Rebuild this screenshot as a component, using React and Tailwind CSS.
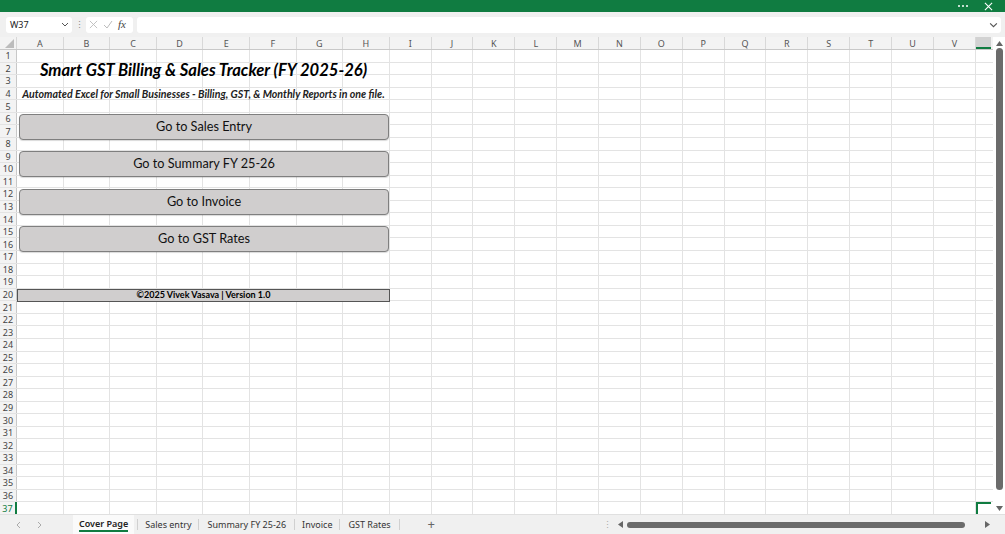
import React from "react";

const COLS = ["A","B","C","D","E","F","G","H","I","J","K","L","M","N","O","P","Q","R","S","T","U","V"];
const GRID = "grid grid-cols-[17px_repeat(8,46.6px)_repeat(14,41.86px)_1fr]";
const ROWS = Array.from({ length: 37 }, (_, i) => i + 1);

function Button({ children, top }) {
  return (
    <div className={`absolute left-[2px] w-[370px] h-[26px] ${top} rounded-[4px] border-[1.5px] border-[#7f7f7f] bg-[#d0cece] flex items-center justify-center text-[12.7px] text-[#111] shadow-[0_1px_1px_rgba(0,0,0,0.15)] whitespace-nowrap`}>
      {children}
    </div>
  );
}

function Sep() {
  return <div className="h-[11px] w-px bg-[#d0d0d0] shrink-0"></div>;
}

export default function App() {
  return (
    <div className="w-[1005px] h-[534px] overflow-hidden flex flex-col bg-white font-['Noto_Sans',sans-serif] select-none">
      {/* Title bar */}
      <div className="h-[12px] shrink-0 bg-[#107c41] flex items-center justify-end pr-[12px] gap-[16px] text-white">
        <div className="flex gap-[2px]">
          <div className="w-[2px] h-[2px] bg-white rounded-full"></div>
          <div className="w-[2px] h-[2px] bg-white rounded-full"></div>
          <div className="w-[2px] h-[2px] bg-white rounded-full"></div>
        </div>
        <svg width="9" height="9" viewBox="0 0 10 10" className="stroke-white" strokeWidth="1.2"><path d="M1 1L9 9M9 1L1 9" /></svg>
      </div>

      {/* Formula bar */}
      <div className="h-[25px] shrink-0 bg-[#f0f0f0] flex items-center pl-[6px] pr-[4px]">
        <div className="w-[66px] h-[16px] bg-white rounded-[3px] flex items-center justify-between pl-[4px] pr-[3px] text-[9px] text-[#222]">
          <span>W37</span>
          <svg width="8" height="5" viewBox="0 0 8 5"><path d="M1 1l3 3 3-3" fill="none" stroke="#555" strokeWidth="1" /></svg>
        </div>
        <div className="w-[14px] flex justify-center text-[#888] text-[9px]">⋮</div>
        <div className="w-[47px] h-[16px] bg-white rounded-[3px] flex items-center gap-[5px] pl-[3px]">
          <svg width="9" height="9" viewBox="0 0 10 10"><path d="M1 1L9 9M9 1L1 9" stroke="#bbb" strokeWidth="1" /></svg>
          <svg width="10" height="9" viewBox="0 0 10 9"><path d="M1 5l3 3 5-7" fill="none" stroke="#bbb" strokeWidth="1" /></svg>
          <span className="font-['Liberation_Serif',serif] italic text-[11px] text-[#444] leading-none">fx</span>
        </div>
        <div className="ml-[4px] flex-1 h-[16px] bg-white rounded-[3px] flex items-center justify-end pr-[3px]">
          <svg width="9" height="6" viewBox="0 0 8 5"><path d="M1 1l3 3 3-3" fill="none" stroke="#555" strokeWidth="1" /></svg>
        </div>
      </div>

      {/* Sheet area */}
      <div className="h-[477px] shrink-0 flex">
        <div className="flex-1 relative overflow-hidden">
          {/* Column headers */}
          <div className={`${GRID} h-[13px] bg-[#f3f3f3] border-b border-[#c8c8c8]`}>
            <div className="relative border-r border-[#d8d8d8]">
              <svg width="9" height="9" viewBox="0 0 9 9" className="absolute right-[2px] bottom-[1px]"><path d="M9 0L9 9L0 9Z" fill="#bcbcbc" /></svg>
            </div>
            {COLS.map((c) => (
              <div key={c} className="border-r border-[#d8d8d8] flex items-center justify-center text-[9px] text-[#555] leading-none">{c}</div>
            ))}
            <div className="bg-[#d2d2d2] border-b-[2px] border-[#107c41] mr-[2px]"></div>
          </div>
          {/* Rows */}
          {ROWS.map((r) => (
            <div key={r} className={`${GRID} h-[12.57px] border-b border-[#e3e3e3]`}>
              <div className={`bg-[#f3f3f3] flex items-center justify-center text-[9px] leading-none ${r === 37 ? "text-[#107c41] border-r-[2px] border-[#107c41]" : "text-[#444] border-r border-[#c8c8c8]"}`}>{r}</div>
              {COLS.map((c) => (
                <div key={c} className="border-r border-[#e3e3e3]"></div>
              ))}
              <div className={r === 37 ? "border-t-[2px] border-l-[2px] border-[#107c41] mr-[2px]" : ""}></div>
            </div>
          ))}

          {/* Overlay content on the sheet */}
          <div className="absolute left-[17px] top-[13px] w-[373px] h-[300px] font-['Lato',sans-serif]">
            <div className="absolute left-0 top-[9px] w-[373px] h-[22px] flex items-center justify-center text-[16.6px] font-bold italic text-black whitespace-nowrap">
              Smart GST Billing &amp; Sales Tracker (FY 2025-26)
            </div>
            <div className="absolute left-0 top-[38px] w-[373px] h-[14px] flex items-center justify-center text-[10.6px] font-bold italic text-[#222] whitespace-nowrap">
              Automated Excel for Small Businesses - Billing, GST, &amp; Monthly Reports in one file.
            </div>
            <Button top="top-[64px]">Go to Sales Entry</Button>
            <Button top="top-[101px]">Go to Summary FY 25-26</Button>
            <Button top="top-[139px]">Go to Invoice</Button>
            <Button top="top-[176px]">Go to GST Rates</Button>
            <div className="absolute left-0 top-[238.5px] w-[373px] h-[13px] bg-[#d0cece] border border-[#555] flex items-center justify-center text-[9px] font-bold text-black whitespace-nowrap">
              ©2025 Vivek Vasava | Version 1.0
            </div>
          </div>
        </div>

        {/* Vertical scrollbar */}
        <div className="w-[12px] bg-white flex flex-col items-center pt-[4px] pb-[3px]">
          <svg width="7" height="5" viewBox="0 0 7 5"><path d="M3.5 0L7 5H0Z" fill="#666" /></svg>
          <div className="w-[7px] flex-1 mt-[2px] mb-[16px] rounded-full bg-[#6b6b6b]"></div>
          <svg width="7" height="5" viewBox="0 0 7 5"><path d="M0 0H7L3.5 5Z" fill="#666" /></svg>
        </div>
      </div>

      {/* Sheet tabs */}
      <div className="h-[20px] shrink-0 bg-[#f0f0f0] border-t border-[#e0e0e0] flex items-center text-[9px] text-[#333] whitespace-nowrap">
        <div className="w-[73px] shrink-0 flex items-center gap-[16px] pl-[16px]">
          <svg width="5" height="8" viewBox="0 0 5 8"><path d="M4 1L1 4l3 3" fill="none" stroke="#aaa" strokeWidth="1" /></svg>
          <svg width="5" height="8" viewBox="0 0 5 8"><path d="M1 1l3 3-3 3" fill="none" stroke="#aaa" strokeWidth="1" /></svg>
        </div>
        <div className="h-full shrink-0 flex items-center bg-[#fafafa] px-[6px]">
          <span className="font-semibold text-[#222] border-b-[2px] border-[#107c41] leading-[12px]">Cover Page</span>
        </div>
        <div className="w-[3px]"></div>
        <Sep />
        <div className="px-[7px] shrink-0">Sales entry</div>
        <Sep />
        <div className="px-[8px] shrink-0">Summary FY 25-26</div>
        <Sep />
        <div className="px-[7px] shrink-0">Invoice</div>
        <Sep />
        <div className="px-[8px] shrink-0">GST Rates</div>
        <Sep />
        <div className="ml-[28px] text-[13px] text-[#666] leading-none shrink-0">+</div>
        <div className="ml-auto flex items-center pr-[15px]">
          <div className="w-[14px] flex justify-center text-[#aaa] text-[9px]">⋮</div>
          <div className="w-[4px]"></div>
          <svg width="5" height="7" viewBox="0 0 5 7"><path d="M5 0V7L0 3.5Z" fill="#666" /></svg>
          <div className="w-[4px]"></div>
          <div className="h-[6px] w-[338px] rounded-full bg-[#6b6b6b]"></div>
          <div className="w-[20px]"></div>
          <svg width="5" height="7" viewBox="0 0 5 7"><path d="M0 0V7L5 3.5Z" fill="#666" /></svg>
        </div>
      </div>
    </div>
  );
}
